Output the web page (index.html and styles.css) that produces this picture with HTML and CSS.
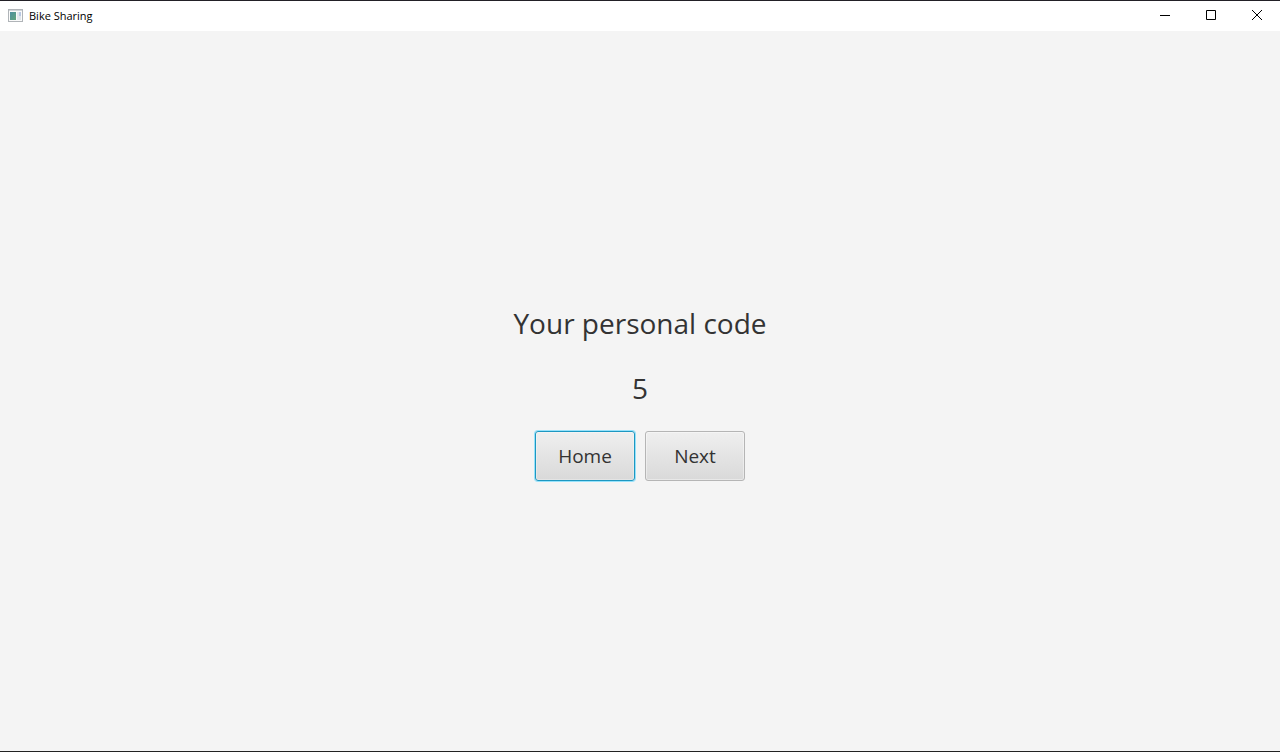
FILE: index.html
```html
<!DOCTYPE html>
<html lang="en">
<head>
<meta charset="utf-8">
<title>Bike Sharing</title>
<link rel="stylesheet" href="styles.css">
</head>
<body>
<div class="window">
  <header class="titlebar">
    <svg class="app-icon" width="16" height="14" viewBox="0 0 16 14" aria-hidden="true">
      <defs>
        <linearGradient id="pane" x1="0" y1="0" x2="1" y2="1">
          <stop offset="0" stop-color="#4d8fa0"/>
          <stop offset="1" stop-color="#62a47c"/>
        </linearGradient>
      </defs>
      <rect x="0.5" y="1.5" width="14" height="12" fill="#fafafa" stroke="#b0b4b8"/>
      <rect x="1" y="2" width="13" height="1" fill="#d0d4d8"/>
      <rect x="2" y="4" width="6" height="8" fill="url(#pane)"/>
      <rect x="9" y="4" width="2" height="8" fill="#e3e8ed"/>
      <rect x="11" y="4" width="2" height="4" fill="#b9c8e2"/>
      <rect x="11" y="8" width="2" height="4" fill="#dfe5ea"/>
    </svg>
    <span class="app-name">Bike Sharing</span>
    <div class="controls">
      <button class="control" type="button" aria-label="Minimize">
        <svg width="10" height="10" viewBox="0 0 10 10"><path d="M0 5.5H10"/></svg>
      </button>
      <button class="control" type="button" aria-label="Maximize">
        <svg width="10" height="10" viewBox="0 0 10 10"><path d="M.5 .5H9.5V9.5H.5Z"/></svg>
      </button>
      <button class="control" type="button" aria-label="Close">
        <svg width="10" height="10" viewBox="0 0 10 10"><path d="M0 0L10 10M10 0L0 10"/></svg>
      </button>
    </div>
  </header>
  <main class="content">
    <h1 class="label">Your personal code</h1>
    <p class="label">5</p>
    <div class="actions">
      <button class="button button-focused" type="button">Home</button>
      <button class="button" type="button">Next</button>
    </div>
  </main>
</div>
</body>
</html>
```
FILE: styles.css
```css
* {
  box-sizing: border-box;
}

body {
  margin: 0;
  background: #f4f4f4;
  color: #333;
  font-family: "Open Sans", "Noto Sans", sans-serif;
}

.window {
  display: flex;
  flex-direction: column;
  min-height: 100vh;
  border-top: 1px solid #222026;
  border-bottom: 1px solid #222222;
}

.titlebar {
  display: flex;
  align-items: center;
  height: 30px;
  padding: 0 0 2px 8px;
  gap: 5px;
  background: #fff;
}

.app-name {
  padding-top: 2px;
  color: #000;
  font-size: 11px;
  line-height: 16px;
}

.controls {
  display: flex;
  margin-left: auto;
}

.control {
  display: flex;
  align-items: center;
  justify-content: center;
  width: 46px;
  height: 28px;
  padding: 0;
  border: 0;
  background: none;
}

.control svg {
  fill: none;
  stroke: #000;
  overflow: visible;
}

.content {
  flex: 1;
  display: flex;
  flex-direction: column;
  align-items: center;
  justify-content: center;
  gap: 21px;
}

.label {
  margin: 0;
  font-size: 28px;
  font-weight: 400;
  line-height: 44px;
}

.actions {
  display: flex;
  gap: 10px;
}

.button {
  width: 100px;
  height: 50px;
  padding: 0;
  border: 1px solid #b5b5b5;
  border-radius: 3px;
  background: linear-gradient(#efefef, #d9d9d9);
  box-shadow: inset 0 0 0 1px rgba(255, 255, 255, 0.4);
  color: #333;
  font-family: inherit;
  font-size: 19px;
  line-height: 28px;
}

.button-focused {
  border-color: #1d97c1;
  box-shadow: 0 0 0 1px #96e2fb, inset 0 0 0 1px rgba(255, 255, 255, 0.3);
}
```
